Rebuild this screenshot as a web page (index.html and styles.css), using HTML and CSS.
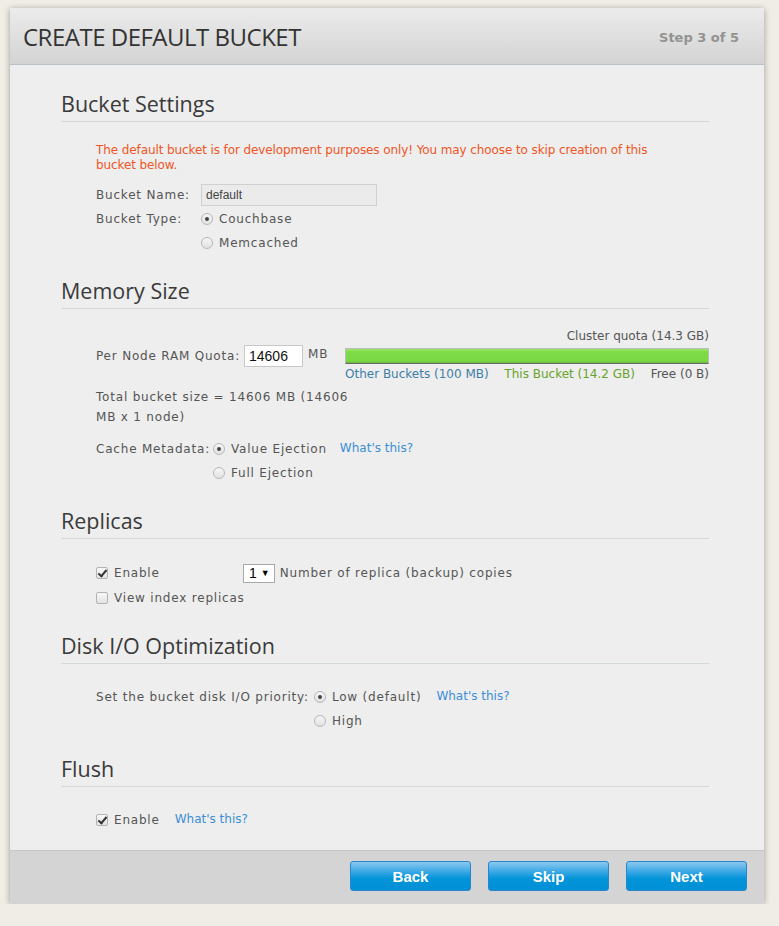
FILE: index.html
```html
<!DOCTYPE html>
<html>
<head>
<meta charset="utf-8">
<link rel="stylesheet" href="styles.css">
</head>
<body>
<div class="dialog">
  <div class="dlg-head">
    <h1>CREATE DEFAULT BUCKET</h1>
    <span class="step">Step 3 of 5</span>
  </div>
  <div class="dlg-body">
    <section class="sec sec-first">
      <h2>Bucket Settings</h2>
      <div class="sec-content">
        <p class="warn">The default bucket is for development purposes only! You may choose to skip creation of this bucket below.</p>
        <div class="row r-name">
          <span class="lbl lbl-w1">Bucket Name:</span>
          <span class="textbox">default</span>
        </div>
        <div class="row r-type">
          <span class="lbl lbl-w1">Bucket Type:</span>
          <div class="opts">
            <label class="opt"><span class="radio on"></span>Couchbase</label>
            <label class="opt"><span class="radio"></span>Memcached</label>
          </div>
        </div>
      </div>
    </section>

    <section class="sec sec-mem">
      <h2>Memory Size</h2>
      <div class="sec-content">
        <div class="quota-title">Cluster quota (14.3 GB)</div>
        <div class="quota-row">
          <div class="ram">
            <span class="lbl">Per Node RAM Quota:</span>
            <span class="numbox">14606</span>
            <span class="unit">MB</span>
          </div>
          <div class="bar-wrap">
            <div class="bar"><div class="bar-fill"></div></div>
            <div class="legend">
              <span class="lg-other">Other Buckets (100 MB)</span>
              <span class="lg-this">This Bucket (14.2 GB)</span>
              <span class="lg-free">Free (0 B)</span>
            </div>
          </div>
        </div>
        <p class="total">Total bucket size = 14606 MB (14606 MB x 1 node)</p>
        <div class="row r-cache">
          <span class="lbl">Cache Metadata:</span>
          <div class="opts">
            <div class="opt-line">
              <label class="opt"><span class="radio on"></span>Value Ejection</label>
              <a class="help">What's this?</a>
            </div>
            <label class="opt"><span class="radio"></span>Full Ejection</label>
          </div>
        </div>
      </div>
    </section>

    <section class="sec sec-rep">
      <h2>Replicas</h2>
      <div class="sec-content">
        <div class="rep-line">
          <label class="opt chk-opt"><span class="check on"></span>Enable</label>
          <span class="select">1 <span class="caret">&#9660;</span></span>
          <span class="rep-text">Number of replica (backup) copies</span>
        </div>
        <label class="opt chk-opt"><span class="check"></span>View index replicas</label>
      </div>
    </section>

    <section class="sec sec-io">
      <h2>Disk I/O Optimization</h2>
      <div class="sec-content">
        <div class="row r-io">
          <span class="lbl">Set the bucket disk I/O priority:</span>
          <div class="opts">
            <div class="opt-line">
              <label class="opt"><span class="radio on"></span>Low (default)</label>
              <a class="help">What's this?</a>
            </div>
            <label class="opt"><span class="radio"></span>High</label>
          </div>
        </div>
      </div>
    </section>

    <section class="sec sec-flush">
      <h2>Flush</h2>
      <div class="sec-content">
        <div class="opt-line">
          <label class="opt chk-opt"><span class="check on"></span>Enable</label>
          <a class="help">What's this?</a>
        </div>
      </div>
    </section>
  </div>
  <div class="dlg-foot">
    <button class="btn">Back</button>
    <button class="btn">Skip</button>
    <button class="btn">Next</button>
  </div>
</div>
</body>
</html>
```

FILE: styles.css
```css
* { box-sizing: border-box; }
html, body { margin: 0; padding: 0; }
body {
  background: #f0ede6;
  font-family: "DejaVu Sans", Verdana, sans-serif;
  font-size: 12px;
  letter-spacing: 0.8px;
  color: #555;
  padding: 8px 15px 0 10px;
}
.dialog {
  width: 754px;
  background: #eeeeee;
  box-shadow: 0 1px 6px rgba(0,0,0,0.35);
  border-radius: 2px;
}
.dlg-head {
  height: 57px;
  display: flex;
  align-items: center;
  justify-content: space-between;
  padding: 0 25px 0 13px;
  background: linear-gradient(#ececec, #d3d3d3);
  border-bottom: 1px solid #b9c0c6;
}
.dlg-head h1 {
  margin: 0;
  font-family: "Open Sans", sans-serif;
  font-weight: 400;
  font-size: 24px;
  letter-spacing: -0.5px;
  color: #333;
}
.step {
  font-family: "DejaVu Sans", sans-serif;
  font-weight: bold;
  font-size: 13px;
  letter-spacing: 0;
  color: #929292;
  margin-top: 2px;
}
.dlg-body {
  padding: 25px 55px 18px 51px;
}
.sec h2 {
  margin: 0;
  font-family: "Open Sans", sans-serif;
  font-weight: 400;
  font-size: 21.5px;
  letter-spacing: 0;
  color: #3a3a3a;
  line-height: 28px;
  padding-bottom: 3px;
  border-bottom: 1px solid #d3d8da;
}
.sec { margin-bottom: 22px; }
.sec-content { padding: 21px 0 0 35px; }
.warn {
  margin: 0 0 11px;
  color: #f05525;
  font-size: 12px;
  letter-spacing: -0.1px;
  line-height: 15px;
  width: 570px;
}
.row { display: flex; align-items: flex-start; }
.lbl { line-height: 24px; white-space: nowrap; }
.lbl-w1 { width: 105px; }
.r-name { align-items: center; height: 22px; }
.r-name .lbl { line-height: 22px; }
.textbox {
  display: block;
  width: 176px;
  height: 22px;
  border: 1px solid #d0d0d0;
  background: #ebebeb;
  padding: 0 4px;
  line-height: 20px;
  font-family: "Liberation Sans", Arial, sans-serif;
  font-size: 12px;
  letter-spacing: 0;
  color: #444;
}
.r-type { margin-top: 1px; }
.opts { display: flex; flex-direction: column; }
.opt {
  display: flex;
  align-items: center;
  line-height: 24px;
  height: 24px;
  white-space: nowrap;
}
.radio {
  width: 12px; height: 12px;
  border-radius: 50%;
  border: 1px solid #b7b7b7;
  background: linear-gradient(#f6f6f6, #e2e2e2);
  margin-right: 6px;
  position: relative;
  flex: none;
}
.radio.on::after {
  content: "";
  position: absolute;
  left: 3px; top: 3px;
  width: 4px; height: 4px;
  border-radius: 50%;
  background: #444;
}
.check {
  width: 12px; height: 12px;
  border-radius: 2px;
  border: 1px solid #b3b3b3;
  background: linear-gradient(#f8f8f8, #e3e3e3);
  margin-right: 6px;
  position: relative;
  flex: none;
}
.check.on::after {
  content: "";
  position: absolute;
  left: 3px; top: 0px;
  width: 3px; height: 7px;
  border: solid #333;
  border-width: 0 2px 2px 0;
  transform: rotate(40deg);
}
.opt-line { display: flex; align-items: flex-start; }
.help {
  color: #3a8fd6;
  margin-left: 15px;
  line-height: 22px;
  letter-spacing: 0;
}
.r-cache .help { margin-left: 13px; }
.sec-mem .sec-content { padding-top: 18px; }
.quota-title { text-align: right; line-height: 18px; letter-spacing: 0; }
.quota-row { display: flex; align-items: flex-start; justify-content: space-between; }
.ram { display: flex; align-items: center; height: 22px; }
.numbox {
  display: block;
  width: 59px; height: 22px;
  background: #fff;
  border: 1px solid #c8c8c8;
  margin-left: 4px;
  line-height: 20px;
  padding-left: 4px;
  font-family: "Liberation Sans Narrow", "Liberation Sans", Arial, sans-serif;
  font-size: 14px;
  letter-spacing: 0;
  color: #111;
}
.unit { margin-left: 5px; margin-top: -5px; }
.bar-wrap { width: 364px; }
.bar {
  height: 16px;
  border: 1px solid #bcbcbc;
  border-bottom-color: #6a6a6a;
  background: #7dda45;
  margin-top: 3px;
}
.bar-fill { height: 100%; background: linear-gradient(#9ee86d 0, #7ddb47 20%, #7ad944 85%, #6bb83a 100%); }
.legend { display: flex; justify-content: space-between; line-height: 20px; letter-spacing: 0; }
.lg-other { color: #3d7ea6; }
.lg-this { color: #68a32a; }
.lg-free { color: #555; }
.total { margin: 3px 0 0; width: 255px; line-height: 20px; }
.r-cache { margin-top: 10px; }
.r-cache .lbl { margin-right: 3px; }
.sec-rep .sec-content { padding-top: 22px; }
.rep-line { display: flex; align-items: center; height: 24px; }
.chk-opt { width: 147px; }
.rep-line + .opt { margin-top: 1px; }
.select {
  display: inline-flex;
  align-items: center;
  height: 19px;
  border: 1px solid #a9a9a9;
  background: #fff;
  padding: 0 4px 0 5px;
  font-family: "Liberation Sans", Arial, sans-serif;
  font-size: 14px;
  letter-spacing: 0;
  color: #000;
  margin-right: 5px;
}
.caret { font-size: 9px; margin-left: 4px; }
.sec-io .sec-content { padding-top: 21px; }
.r-io .lbl { margin-right: 5px; }
.sec-flush .sec-content { padding-top: 21px; }
.sec-flush .chk-opt { width: auto; }
.sec-flush .help { margin-left: 15px; }
.sec-flush { margin-bottom: 0; }
.dlg-foot {
  height: 54px;
  border-top: 1px solid #c6c6c6;
  background: #d4d4d4;
  display: flex;
  justify-content: flex-end;
  align-items: flex-start;
  padding-top: 10px;
  gap: 17px;
  padding-right: 17px;
  border-radius: 0 0 2px 2px;
}
.btn {
  width: 121px;
  height: 30px;
  border: 1px solid #2a86cc;
  border-radius: 3px;
  background: linear-gradient(#8bc8f0 0%, #2ea3e3 40%, #0293d8 60%, #0090d6 100%);
  color: #fff;
  font-family: "Liberation Sans Narrow", "Liberation Sans", Arial, sans-serif;
  font-weight: bold;
  font-size: 15px;
  letter-spacing: 0;
  padding: 0;
}
```
